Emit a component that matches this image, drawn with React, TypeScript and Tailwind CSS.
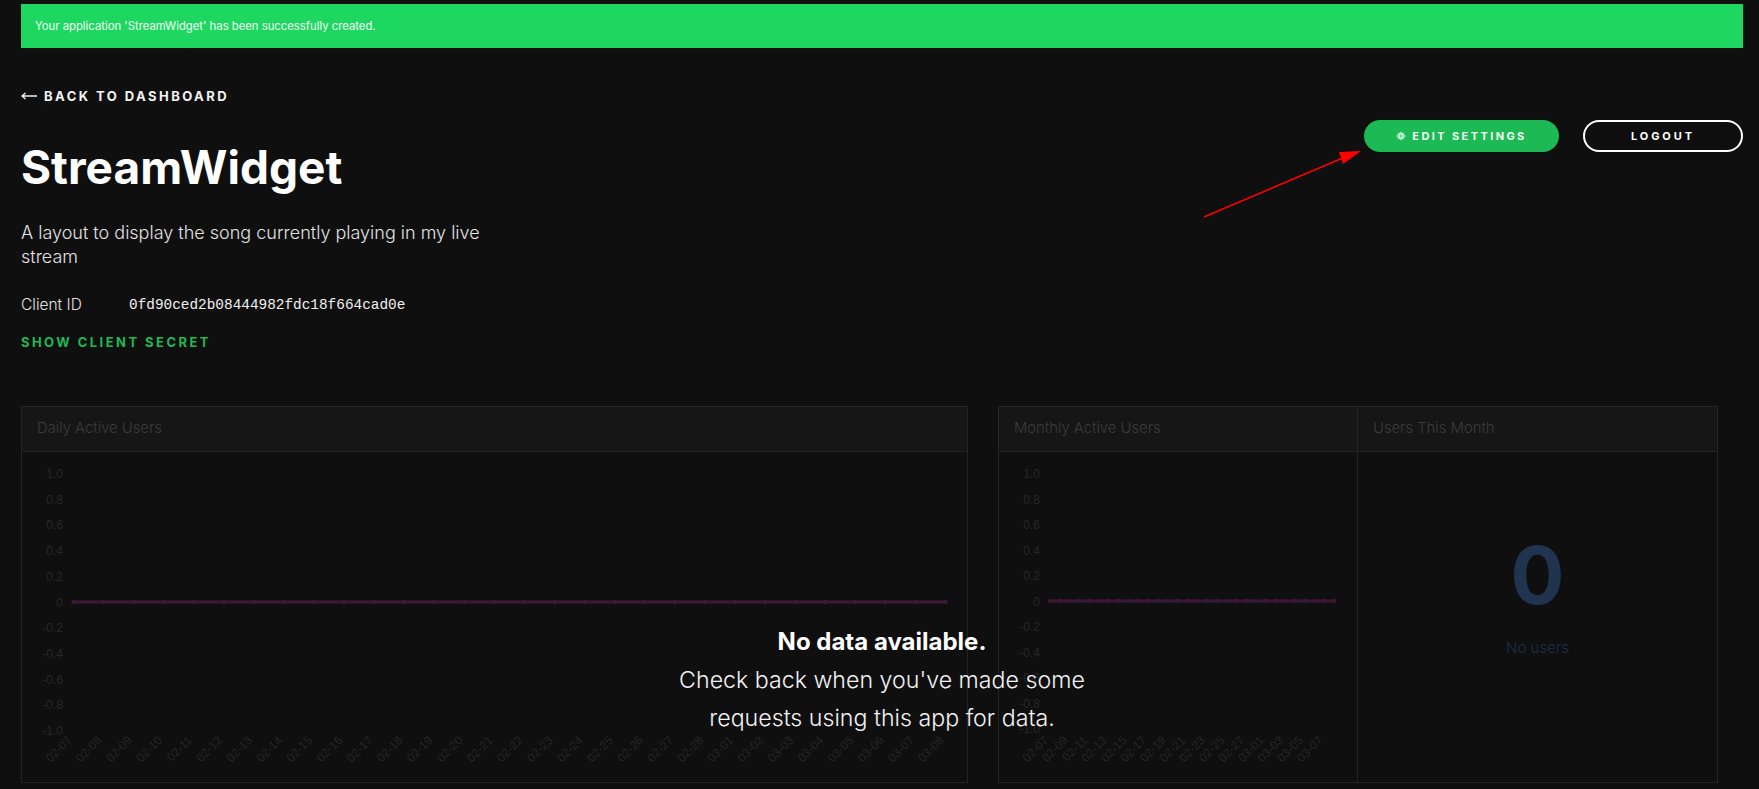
const F = "font-['Inter','Liberation_Sans',sans-serif]";

const yLabels = ["1.0", "0.8", "0.6", "0.4", "0.2", "0", "-0.2", "-0.4", "-0.6", "-0.8", "-1.0"];

const dailyDates = [
  "02-07","02-08","02-09","02-10","02-11","02-12","02-13","02-14","02-15","02-16",
  "02-17","02-18","02-19","02-20","02-21","02-22","02-23","02-24","02-25","02-26",
  "02-27","02-28","03-01","03-02","03-03","03-04","03-05","03-06","03-07","03-08",
];

function Chart({
  width, axisX, startX, step, lineY, topY, yStep, labelEvery,
}: {
  width: number; axisX: number; startX: number; step: number; lineY: number; topY: number; yStep: number; labelEvery: number;
}) {
  const xs = dailyDates.map((_, i) => startX + i * step);
  return (
    <svg width={width} height={330} className="block" fontFamily="Liberation Sans, sans-serif">
      {yLabels.map((t, i) => (
        <text key={t} x={axisX} y={topY + i * yStep + 5} textAnchor="end" fontSize={12} fill="#272727">{t}</text>
      ))}
      <line x1={xs[0]} x2={xs[xs.length - 1]} y1={lineY} y2={lineY} stroke="#3d1838" strokeWidth={3} />
      {xs.map((x) => <circle key={x} cx={x} cy={lineY} r={2.2} fill="#3d1838" />)}
      {dailyDates.map((d, i) =>
        i % labelEvery === 0 ? (
          <text key={d} fontSize={12} fill="#252525" textAnchor="end" transform={`translate(${xs[i] - 1} ${topY + 268}) rotate(-45)`}>{d}</text>
        ) : null
      )}
    </svg>
  );
}

function PanelHead({ title }: { title: string }) {
  return (
    <div className="h-[45px] bg-[#161616] border-b border-[#242424] pl-[15px] pt-[9px] text-[14.8px] leading-[24px] font-light text-[#3c3c3c]">
      {title}
    </div>
  );
}

export default function App() {
  return (
    <div className={`relative h-[789px] overflow-hidden bg-[#0f0f0f] text-white ${F}`}>
      <div className="pt-[4px] pl-[21px] pr-[16px]">
        <div className="h-[44px] bg-[#1ed760] pl-[14px] flex items-center text-[11.3px] text-[#f3fff7]">
          Your application 'StreamWidget' has been successfully created.
        </div>
      </div>

      <div className="flex justify-between pl-[21px] pr-[16px]">
        <div className="w-[470px]">
          <div className="mt-[39px] flex items-center gap-[7px] text-[13px] leading-[18px] font-bold tracking-[2.45px] text-[#f2f2f2]">
            <svg width="16" height="8" viewBox="0 0 16 8" fill="none" stroke="#f2f2f2" strokeWidth="1.4">
              <path d="M16 4H1M4.5 1L1 4l3.5 3" />
            </svg>
            BACK TO DASHBOARD
          </div>
          <h1 className="mt-[32px] text-[46px] leading-[60px] font-bold text-white">StreamWidget</h1>
          <p className="mt-[24px] text-[18px] leading-[24px] font-light text-[#e2e2e2]">
            A layout to display the song currently playing in my live stream
          </p>
          <div className="mt-[24px] flex items-center text-[15.5px] leading-[24px] font-light text-[#e2e2e2]">
            <span className="w-[108px]">Client ID</span>
            <span className="font-['Liberation_Mono',monospace] text-[14.4px] font-normal text-[#f0f0f0]">0fd90ced2b08444982fdc18f664cad0e</span>
          </div>
          <div className="mt-[16px] text-[13px] leading-[18px] font-bold tracking-[2.45px] text-[#1db954]">SHOW CLIENT SECRET</div>
        </div>
        <div className="mt-[72px] flex gap-[24px]">
          <div className="w-[195px] h-[32px] rounded-full bg-[#1db954] flex items-center justify-center gap-[6px] text-[11px] font-bold tracking-[2.4px] text-[#f0fff5]">
            <svg width="10" height="10" viewBox="0 0 10 10">
              <circle cx="5" cy="5" r="3.6" fill="#b5ecc9" />
              <circle cx="5" cy="5" r="1.3" fill="#6fd695" />
              <path d="M5 .4v1.4M5 8.2v1.4M.4 5h1.4M8.2 5h1.4M1.8 1.8l1 1M7.2 7.2l1 1M8.2 1.8l-1 1M2.8 7.2l-1 1" stroke="#b5ecc9" strokeWidth="1" />
            </svg>
            EDIT SETTINGS
          </div>
          <div className="w-[160px] h-[32px] rounded-full border-2 border-white flex items-center justify-center text-[11px] font-bold tracking-[2.9px] text-white">
            LOGOUT
          </div>
        </div>
      </div>

      <div className="mt-[55px] flex pl-[21px]">
        <div className="w-[947px] h-[377px] border border-[#242424]">
          <PanelHead title="Daily Active Users" />
          <Chart width={945} axisX={41} startX={51.5} step={30.07} lineY={150} topY={21} yStep={25.7} labelEvery={1} />
        </div>
        <div className="ml-[30px] w-[720px] h-[377px] border border-[#242424] flex">
          <div className="w-[359px] border-r border-[#242424]">
            <PanelHead title="Monthly Active Users" />
            <Chart width={358} axisX={41} startX={51} step={9.8} lineY={149} topY={21} yStep={25.5} labelEvery={2} />
          </div>
          <div className="flex-1">
            <PanelHead title="Users This Month" />
            <div className="flex flex-col items-center pt-[83px]">
              <div className="text-[80px] leading-[80px] font-bold text-[#20334f]">0</div>
              <div className="mt-[21px] text-[15px] leading-[24px] font-light text-[#1e2f49]">No users</div>
            </div>
          </div>
        </div>
      </div>

      <svg className="absolute left-[1195px] top-[145px]" width="175" height="80" viewBox="1195 145 175 80">
        <path d="M1204 217L1345 157" stroke="#ff0000" strokeWidth="1.5" />
        <path d="M1361 151L1339 152L1343 164Z" fill="#ff0000" />
      </svg>

      <div className="absolute left-[637px] top-[623px] w-[490px] text-center">
        <div className="text-[24px] leading-[38px] font-bold text-white">No data available.</div>
        <div className="text-[23.2px] leading-[38px] font-light text-[#f2f2f2]">Check back when you've made some<br />requests using this app for data.</div>
      </div>
    </div>
  );
}
